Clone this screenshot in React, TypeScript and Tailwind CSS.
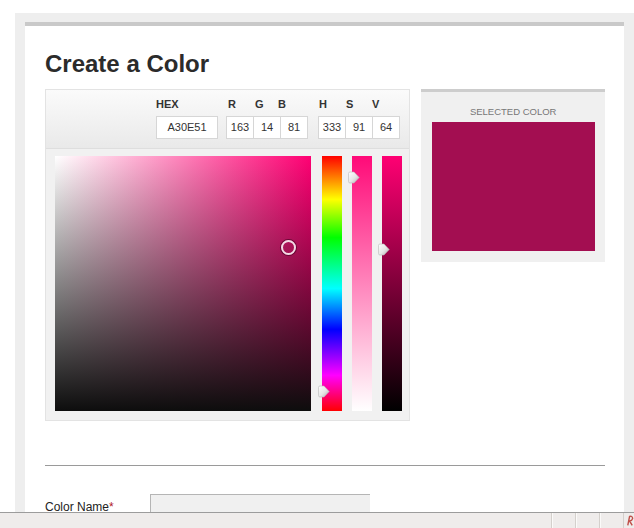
import React from "react";

function Marker() {
  return (
    <svg width="13" height="13" viewBox="0 0 13 13">
      <defs>
        <linearGradient id="mg" x1="0" y1="0" x2="1" y2="1">
          <stop offset="0" stopColor="#ffffff" />
          <stop offset="0.55" stopColor="#e6e6e6" />
          <stop offset="1" stopColor="#a9a9a9" />
        </linearGradient>
      </defs>
      <path
        d="M1.5 2.5 Q1.5 1 3 1 L7 1 L12.2 6.5 L7 12 L3 12 Q1.5 12 1.5 10.5 Z"
        fill="url(#mg)"
        stroke="#b8b8b8"
        strokeWidth="0.6"
      />
    </svg>
  );
}

function Field({
  label,
  value,
  w,
  labelCls,
  first,
}: {
  label: string;
  value: string;
  w: string;
  labelCls: string;
  first?: boolean;
}) {
  return (
    <div className={`flex flex-col ${first ? "" : "-ml-px"}`}>
      <div className={`text-[11px] font-bold leading-[13px] text-[#333] ${labelCls}`}>{label}</div>
      <div
        className={`mt-[5px] h-[23px] ${w} bg-white border border-[#d6d6d6] flex items-center justify-center text-[11px] text-[#333]`}
      >
        {value}
      </div>
    </div>
  );
}

export default function App() {
  return (
    <div className="w-[634px] h-[528px] overflow-hidden bg-white flex flex-col font-['Liberation_Sans',Arial,sans-serif]">
      <div className="flex-1 min-h-0 overflow-hidden pt-[13px] pl-[15px]">
        <div className="bg-[#eeeeee] h-full pt-[9px] px-[10px]">
          <div className="bg-white border-t-4 border-[#c9c9c9] h-full pl-[20px] pr-[19px]">
            <h1 className="mt-[24px] text-[24px] font-bold leading-[28px] text-[#2b2b2b]">Create a Color</h1>
            <div className="mt-[11px] flex items-start gap-[11px]">
              {/* Picker */}
              <div className="w-[366px] h-[332px] border border-[#e3e3e3] flex flex-col">
                <div className="h-[59px] shrink-0 bg-[linear-gradient(to_bottom,#fbfbfb,#e9e9e9)] border-b border-[#dedede] pl-[110px] pt-[8px] flex items-start">
                  <Field label="HEX" value="A30E51" w="w-[62px]" labelCls="" first />
                  <div className="ml-[8px] flex">
                    <Field label="R" value="163" w="w-[28px]" labelCls="pl-[2px]" first />
                    <Field label="G" value="14" w="w-[28px]" labelCls="pl-[2px]" />
                    <Field label="B" value="81" w="w-[28px]" labelCls="-ml-[2px]" />
                  </div>
                  <div className="ml-[10px] flex">
                    <Field label="H" value="333" w="w-[28px]" labelCls="pl-[1px]" first />
                    <Field label="S" value="91" w="w-[28px]" labelCls="pl-[1px]" />
                    <Field label="V" value="64" w="w-[28px]" labelCls="" />
                  </div>
                </div>
                <div className="flex-1 bg-[#f1f1f1] pl-[9px] pt-[7px] flex items-start">
                  <div className="relative w-[256px] h-[255px] bg-[linear-gradient(to_bottom,rgba(0,0,0,0),#0d0d0d),linear-gradient(to_right,#ffffff,#ff0073)]">
                    <div className="absolute left-[226px] top-[84px] w-[15px] h-[15px] rounded-full border-2 border-[#f3dbe6] shadow-[0_0_0_1px_rgba(60,0,30,0.6)]" />
                  </div>
                  <div className="relative ml-[11px] w-[20px] h-[255px] bg-[linear-gradient(to_bottom,#ff0000,#ffff00_17%,#00ff00_32%,#00ffff_52%,#0000ff_68%,#ff00ff_86%,#ff0000)]">
                    <div className="absolute left-[-5px] top-[229px]">
                      <Marker />
                    </div>
                  </div>
                  <div className="relative ml-[10px] w-[20px] h-[255px] bg-[linear-gradient(to_bottom,#ff0a78,#ffffff)]">
                    <div className="absolute left-[-5px] top-[15px]">
                      <Marker />
                    </div>
                  </div>
                  <div className="relative ml-[10px] w-[20px] h-[255px] bg-[linear-gradient(to_bottom,#ff0073,#000000)]">
                    <div className="absolute left-[-5px] top-[87px]">
                      <Marker />
                    </div>
                  </div>
                </div>
              </div>
              {/* Selected */}
              <div className="w-[184px] h-[173px] border-t-[3px] border-[#cdcdcd] bg-[#f0f0f0] flex flex-col items-center">
                <div className="mt-[14px] text-[9.5px] leading-[12px] text-[#777]">SELECTED COLOR</div>
                <div className="mt-[4px] w-[163px] h-[129px] bg-[#a30e51]" />
              </div>
            </div>
            <div className="mt-[44px] border-t border-[#9a9a9a]" />
            <div className="mt-[28px] flex items-start">
              <div className="w-[105px] pt-[6px] text-[12px] leading-[14px] text-[#222]">
                Color Name<span className="text-[#b0181e]">*</span>
              </div>
              <div className="w-[220px] h-[30px] bg-[#f0f0f0] border-t border-l border-[#b5b5b5]" />
            </div>
          </div>
        </div>
      </div>
      {/* status bar */}
      <div className="h-[16px] shrink-0 border-t border-[#9c9c9c] bg-[#efeceb] flex justify-end">
        <div className="w-[24px] border-l border-[#d4d0cc] shadow-[inset_1px_0_0_#fbfaf9]" />
        <div className="w-[24px] border-l border-[#d4d0cc] shadow-[inset_1px_0_0_#fbfaf9]" />
        <div className="w-[24px] border-l border-[#d4d0cc] shadow-[inset_1px_0_0_#fbfaf9]" />
        <div className="w-[11px] border-l border-[#d4d0cc] flex items-start pl-[2px] pt-[1px]">
          <svg width="9" height="13" viewBox="0 0 9 13">
            <path d="M2 12 L4 2 Q7 1 7.5 4 Q7 6.5 4 7 L7 12" fill="none" stroke="#c0504a" strokeWidth="1.6" />
          </svg>
        </div>
      </div>
    </div>
  );
}
